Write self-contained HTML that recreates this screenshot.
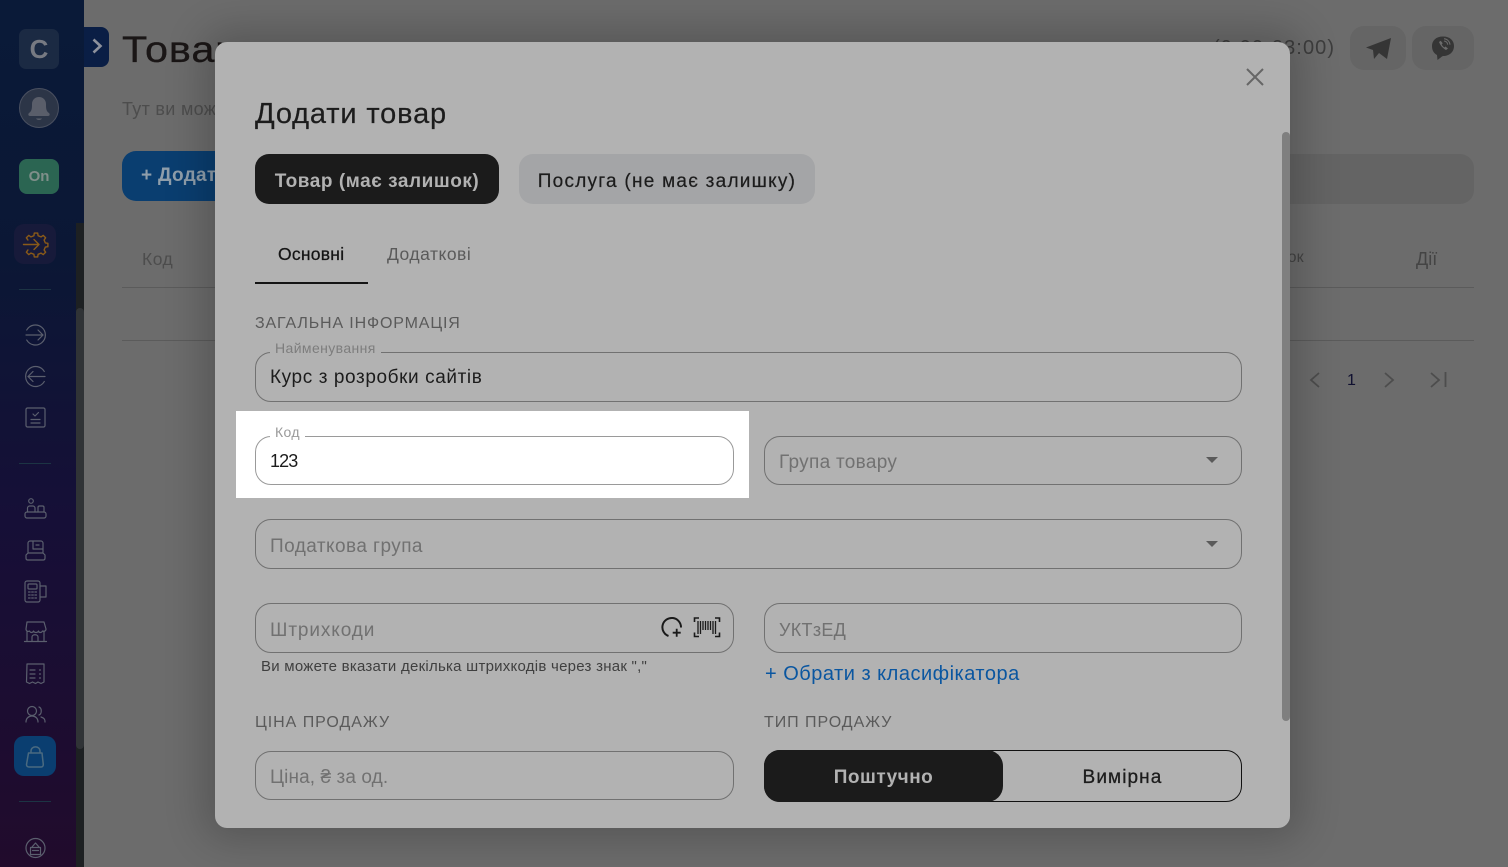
<!DOCTYPE html>
<html lang="uk"><head><meta charset="utf-8"><title>Товари</title>
<style>
html,body{margin:0;padding:0}
body{width:1508px;height:867px;overflow:hidden;position:relative;background:#6c6c6c;font-family:"Liberation Sans","DejaVu Sans",sans-serif;color:#1c1c1c}
.a{position:absolute;white-space:nowrap}
svg{position:absolute;overflow:visible}
.side{left:0;top:0;width:84px;height:867px;background:linear-gradient(180deg,#0a1a38 0%,#0b1735 30%,#160f37 60%,#210b2c 100%)}
.ic{fill:none;stroke:#5b5f6e;stroke-width:1.2;stroke-linecap:round;stroke-linejoin:round}
.hr{left:19px;width:32px;height:1px;background:#1c3444}
.modal{left:215px;top:42px;width:1075px;height:786px;background:#b2b2b2;border-radius:12px;box-shadow:0 0 40px 12px rgba(0,0,0,.2)}
.f{box-sizing:border-box;border:1px solid #717171;border-radius:16px}
.ph{font-size:19px;color:#717171;letter-spacing:.3px}
.lbl{font-size:16px;color:#5a5a5a;letter-spacing:.95px}
.fl{font-size:14px;color:#7d7d7d;letter-spacing:.4px;padding:0 5px;background:#b2b2b2;line-height:13px}
.arr{width:0;height:0;border-left:6.500px solid transparent;border-right:6.500px solid transparent;border-top:6.500px solid #5a5a5a}
</style></head><body>

<!-- page behind -->
<div class="a" style="left:122px;top:28px;font-size:37px;line-height:44px;color:#1a1616;letter-spacing:.8px;transform-origin:0 0;transform:scaleX(1.12);-webkit-text-stroke:.3px #1a1616">Товари</div>
<div class="a" style="left:122px;top:99px;font-size:18px;color:#4d4d4d;letter-spacing:.3px">Тут ви можете</div>
<div class="a" style="left:122px;top:151px;width:150px;height:50px;border-radius:14px;background:#0a3e70"></div>
<div class="a" style="left:141px;top:165px;font-size:19px;font-weight:bold;color:#8f9eab;letter-spacing:.3px">+ Додати</div>
<div class="a" style="left:142px;top:249px;font-size:17.500px;color:#4d4d4d;letter-spacing:.5px">Код</div>
<div class="a" style="left:122px;top:287px;width:1352px;height:1px;background:#5b5b5b"></div>
<div class="a" style="left:122px;top:340px;width:1352px;height:1px;background:#5b5b5b"></div>
<div class="a" style="left:1238px;top:249px;font-size:16px;color:#444">Залишок</div>
<div class="a" style="left:1416px;top:249px;font-size:18px;color:#444">Дії</div>
<div class="a" style="left:1290px;top:154px;width:184px;height:50px;border-radius:0 14px 14px 0;background:#646464"></div>
<div class="a" style="left:1213px;top:37px;font-size:20px;color:#3d3d3d;letter-spacing:1.100px">(9:00-23:00)</div>
<div class="a" style="left:1350px;top:26px;width:56px;height:44px;border-radius:14px;background:#656565"></div>
<div class="a" style="left:1412px;top:26px;width:62px;height:44px;border-radius:14px;background:#656565"></div>
<svg style="left:0;top:0" width="1508" height="867">
<path d="M1366 47.500L1391 38 1387 59 1379 53 1374 59 1373 50Z" fill="#353535"/>
<path d="M1443 36.500c7 0 11 4 11 9.500 0 6-4.500 10-11 10l-1 .5-4.500 3.500-.5-5c-3.500-2-5-5-5-9 0-5.500 4-9.500 11-9.500z" fill="#353535"/>
<path d="M1439 42c1.500 3.500 3.500 6 7 8l2-1.500-2.500-2-1.200 1c-1-.8-2-1.900-2.600-3l1-1.200-2-2.500z" fill="#6c6c6c"/>
<path d="M1444 41c2 .2 3.500 1.500 3.700 3.700M1444 38.800c3.200.2 5.700 2.500 6 5.900" stroke="#6c6c6c" fill="none"/>
<path d="M1319 373l-8 7 8 7M1385 373l8 7-8 7M1431 373l8 7-8 7" stroke="#4d4d4d" stroke-width="1.800" fill="none"/>
<path d="M1445.500 372v15" stroke="#4d4d4d" stroke-width="1.800"/>
</svg>
<div class="a" style="left:1347px;top:372px;font-size:16px;color:#101030">1</div>

<!-- sidebar -->
<div class="a side"></div>
<div class="a" style="left:76px;top:223px;width:8px;height:644px;background:#1d2022"></div>
<div class="a" style="left:76px;top:308px;width:8px;height:441px;border-radius:4px;background:#303336"></div>
<div class="a" style="left:84px;top:27px;width:25px;height:40px;border-radius:0 8px 8px 0;background:#0a1e45"></div>
<svg style="left:0;top:0" width="110" height="80"><path d="M93.500 40.500l7 6.500-7 6.500" transform="translate(0,-1)" fill="none" stroke="#8d919c" stroke-width="2.600"/></svg>
<div class="a" style="left:19px;top:29px;width:40px;height:40px;border-radius:7px;background:#1b2a43;color:#777a82;font-weight:bold;font-size:26px;line-height:41px;text-align:center">C</div>
<div class="a" style="left:19px;top:88px;width:38px;height:38px;border-radius:50%;background:#2c3547;border:1px solid #4a5060"></div>
<svg style="left:0;top:0" width="84" height="140"><path d="M29 113c3-2 3-5 3-9 0-4 3-7 7-7s7 3 7 7c0 4 0 7 3 9 1 1 1 3-1 3H30c-2 0-2-2-1-3z" fill="#5a5e6a"/><path d="M36 118.500h6c-1 2-5 2-6 0z" fill="#5a5e6a"/></svg>
<div class="a" style="left:19px;top:159px;width:40px;height:35px;border-radius:8px;background:#2b6552;color:#7f8f8a;font-weight:bold;font-size:15px;line-height:36px;text-align:center">On</div>
<div class="a" style="left:14px;top:224px;width:42px;height:40px;border-radius:10px;background:#171a3a"></div>
<div class="a hr" style="top:289px"></div>
<div class="a hr" style="top:463px"></div>
<div class="a hr" style="top:801px"></div>
<div class="a" style="left:14px;top:736px;width:42px;height:40px;border-radius:10px;background:#0a3e70"></div>
<svg style="left:0;top:0" width="84" height="867">
<g fill="none" stroke="#8a5a18" stroke-width="1.400" stroke-linecap="round" stroke-linejoin="round">
<path d="M27.900 240L26.400 237.800 28.800 235.400 31 236.900 33.900 235.700 34.300 233.100H37.700L38.100 235.700 41 236.900 43.200 235.400 45.600 237.800 44.100 240 45.300 242.900 47.900 243.300V246.700L45.300 247.100 44.100 250 45.600 252.200 43.200 254.600 41 253.100 38.100 254.300 37.700 256.900H34.300L33.900 254.300 31 253.100 28.800 254.600 26.400 252.200 27.900 250"/>
<path d="M23.500 244.500H39M34 239.500l5 5-5 5"/>
</g>
<g class="ic">
<path d="M26.700 330a10 10 0 1 1 0 10M26 335h17M38 330l5 5-5 5"/>
<path d="M44.300 371.500a10 10 0 1 0 0 10M45 376.500H28M33 371.500l-5 5 5 5"/>
<rect x="26" y="408" width="19" height="19" rx="1.500"/><path d="M33 414l2 2 3.500-3.500M31 419.500h9M31 423h9"/>
<circle cx="31" cy="501" r="2.300"/><path d="M27.500 512v-4c0-1 1-2 2-2h3.500c1 0 2 1 2 2v4M38 512v-4.500c0-1 .5-1.500 1.500-1.500h3c1 0 1.500.5 1.500 1.500v4.500"/><rect x="25" y="512" width="21" height="6" rx="2"/>
<path d="M28 553v-10c0-1 1-2 2-2h11c1 0 2 1 2 2v10M28 553h15l2 2v3c0 1-.5 2-1.500 2h-16c-1 0-1.500-1-1.500-2v-3zM33 541v8h10M36 545h3"/>
<rect x="25" y="581" width="15" height="21" rx="2"/><rect x="28" y="584" width="9" height="5" rx="1"/><path d="M40 586h6v11h-6"/><path d="M28.500 592h8M28.500 595h8M28.500 598h8" stroke-dasharray="1.600 1.600"/>
<path d="M27 622h17l2 7c0 2-2 3-3.500 2-1 2-3.500 2-4 0-1 2-4 2-5 0-1 2-3 2-4 0-1.500 1-3.500 0-3.500-2zM27 631v9.500M44 631v9.500M24.500 641.500h22M32 641v-4c0-3 6-3 6 0v4"/>
<path d="M27 664h17v18l-3 1.500-3-1.500-2.500 1.500-3-1.500-3 1.500-3-1.500zM30 670h5M30 674h5M30 678h5M39.500 670h1M39.500 674h1M39.500 678h1"/>
<circle cx="32" cy="711" r="4.500"/><path d="M26 722c0-8 12-8 12 0M39 707c3 1 3 7 0 8M41 717c3 1 4 2 4 5"/>
<path d="M28.500 753h13.500l1.300 11.500c0 1.500-1 2.500-2.300 2.500H29c-1.500 0-2.500-1-2.500-2.500zM31 753v-2c0-5.500 9-5.500 9 0v2" stroke="#4a6a80" stroke-width="1.500"/>
<circle cx="35.500" cy="848" r="9.500"/><path d="M30.500 847.500h10v7h-10zM32 847l3.500-4 3.500 4M32.500 850.500h6"/>
</g>
</svg>

<!-- modal -->
<div class="a modal"></div>
<div class="a" style="left:1282px;top:132px;width:8px;height:589px;border-radius:4px;background:#7f7f7f"></div>
<svg style="left:0;top:0" width="1508" height="867"><path d="M1247 69l16 16M1263 69l-16 16" stroke="#666" stroke-width="2"/></svg>

<div class="a" style="left:255px;top:97px;font-size:29px;line-height:35px;color:#1c1c1c;letter-spacing:.85px;-webkit-text-stroke:.2px #1c1c1c">Додати товар</div>

<div class="a" style="left:255px;top:154px;width:244px;height:50px;border-radius:14px;background:#1b1b1b;color:#b2b2b2;font-size:19px;font-weight:bold;line-height:55px;text-align:center;letter-spacing:.55px">Товар (має залишок)</div>
<div class="a" style="left:519px;top:154px;width:296px;height:50px;border-radius:14px;background:#a4a5a7;color:#1c1c1c;font-size:19px;line-height:55px;text-align:center;letter-spacing:1.250px;-webkit-text-stroke:.2px #1c1c1c">Послуга (не має залишку)</div>

<div class="a" style="left:278px;top:244px;font-size:17.500px;color:#141414;letter-spacing:.25px;-webkit-text-stroke:.25px #141414">Основні</div>
<div class="a" style="left:387px;top:244px;font-size:17.500px;color:#5a5a5a;letter-spacing:.5px">Додаткові</div>
<div class="a" style="left:255px;top:282px;width:113px;height:2px;background:#141414"></div>

<div class="a lbl" style="left:255px;top:315px;letter-spacing:.85px">ЗАГАЛЬНА ІНФОРМАЦІЯ</div>
<div class="a f" style="left:255px;top:352px;width:987px;height:50px"></div>
<div class="a fl" style="left:270px;top:342px">Найменування</div>
<div class="a" style="left:270px;top:367px;font-size:19px;color:#1c1c1c;letter-spacing:.6px">Курс з розробки сайтів</div>

<!-- highlight -->
<div class="a" style="left:236px;top:411px;width:513px;height:87px;background:#fff"></div>
<div class="a f" style="left:255px;top:436px;width:479px;height:49px;border-color:#9a9a9a;background:#fff"></div>
<div class="a fl" style="left:270px;top:426px;background:#fff;color:#9a9a9a">Код</div>
<div class="a" style="left:270px;top:451px;font-size:18px;color:#1c1c1c;letter-spacing:-.9px">123</div>

<div class="a f" style="left:764px;top:436px;width:478px;height:49px"></div>
<div class="a ph" style="left:779px;top:452px">Група товару</div>
<div class="a arr" style="left:1206px;top:457px"></div>

<div class="a f" style="left:255px;top:519px;width:987px;height:50px"></div>
<div class="a ph" style="left:270px;top:536px;letter-spacing:.45px">Податкова група</div>
<div class="a arr" style="left:1206px;top:541px"></div>

<div class="a f" style="left:255px;top:603px;width:479px;height:50px"></div>
<div class="a ph" style="left:270px;top:620px;letter-spacing:.9px">Штрихкоди</div>
<svg style="left:0;top:0" width="1508" height="867">
<path d="M681 627.500A9.300 9.300 0 1 0 668.500 636" fill="none" stroke="#1a1a1a" stroke-width="2"/>
<path d="M676.700 628.700v8M672.700 632.700h8" stroke="#1a1a1a" stroke-width="1.800"/>
<path d="M699 618h-4.500v4M715 618h4.500v4M699 636.500h-4.500v-4M715 636.500h4.500v-4" fill="none" stroke="#1a1a1a" stroke-width="1.600"/>
<path d="M698 621v13M700.500 621v13M703 621v9M705.500 621v9M708 621v9M710.500 621v9M713 621v13M715.500 621v13" stroke="#1a1a1a" stroke-width="1.300"/>
</svg>
<div class="a" style="left:261px;top:658px;font-size:15px;color:#3f3f3f;letter-spacing:.25px">Ви можете вказати декілька штрихкодів через знак ","</div>

<div class="a f" style="left:764px;top:603px;width:478px;height:50px"></div>
<div class="a ph" style="left:779px;top:620px;font-size:18px">УКТзЕД</div>
<div class="a" style="left:765px;top:663px;font-size:20px;color:#0a56a0;letter-spacing:.5px">+ Обрати з класифікатора</div>

<div class="a lbl" style="left:255px;top:714px">ЦІНА ПРОДАЖУ</div>
<div class="a lbl" style="left:764px;top:714px">ТИП ПРОДАЖУ</div>
<div class="a f" style="left:255px;top:751px;width:479px;height:49px"></div>
<div class="a ph" style="left:270px;top:767px;letter-spacing:.1px">Ціна, ₴ за од.</div>

<div class="a" style="left:764px;top:750px;width:478px;height:52px;box-sizing:border-box;border:1px solid #111;border-radius:16px"></div>
<div class="a" style="left:764px;top:750px;width:239px;height:52px;border-radius:16px;background:#1b1b1b;color:#b2b2b2;font-size:19px;font-weight:bold;line-height:55px;text-align:center;letter-spacing:.5px">Поштучно</div>
<div class="a" style="left:1003px;top:750px;width:239px;height:52px;color:#1c1c1c;font-size:19px;line-height:55px;text-align:center;letter-spacing:1.100px;-webkit-text-stroke:.3px #1c1c1c">Вимірна</div>
</body></html>
